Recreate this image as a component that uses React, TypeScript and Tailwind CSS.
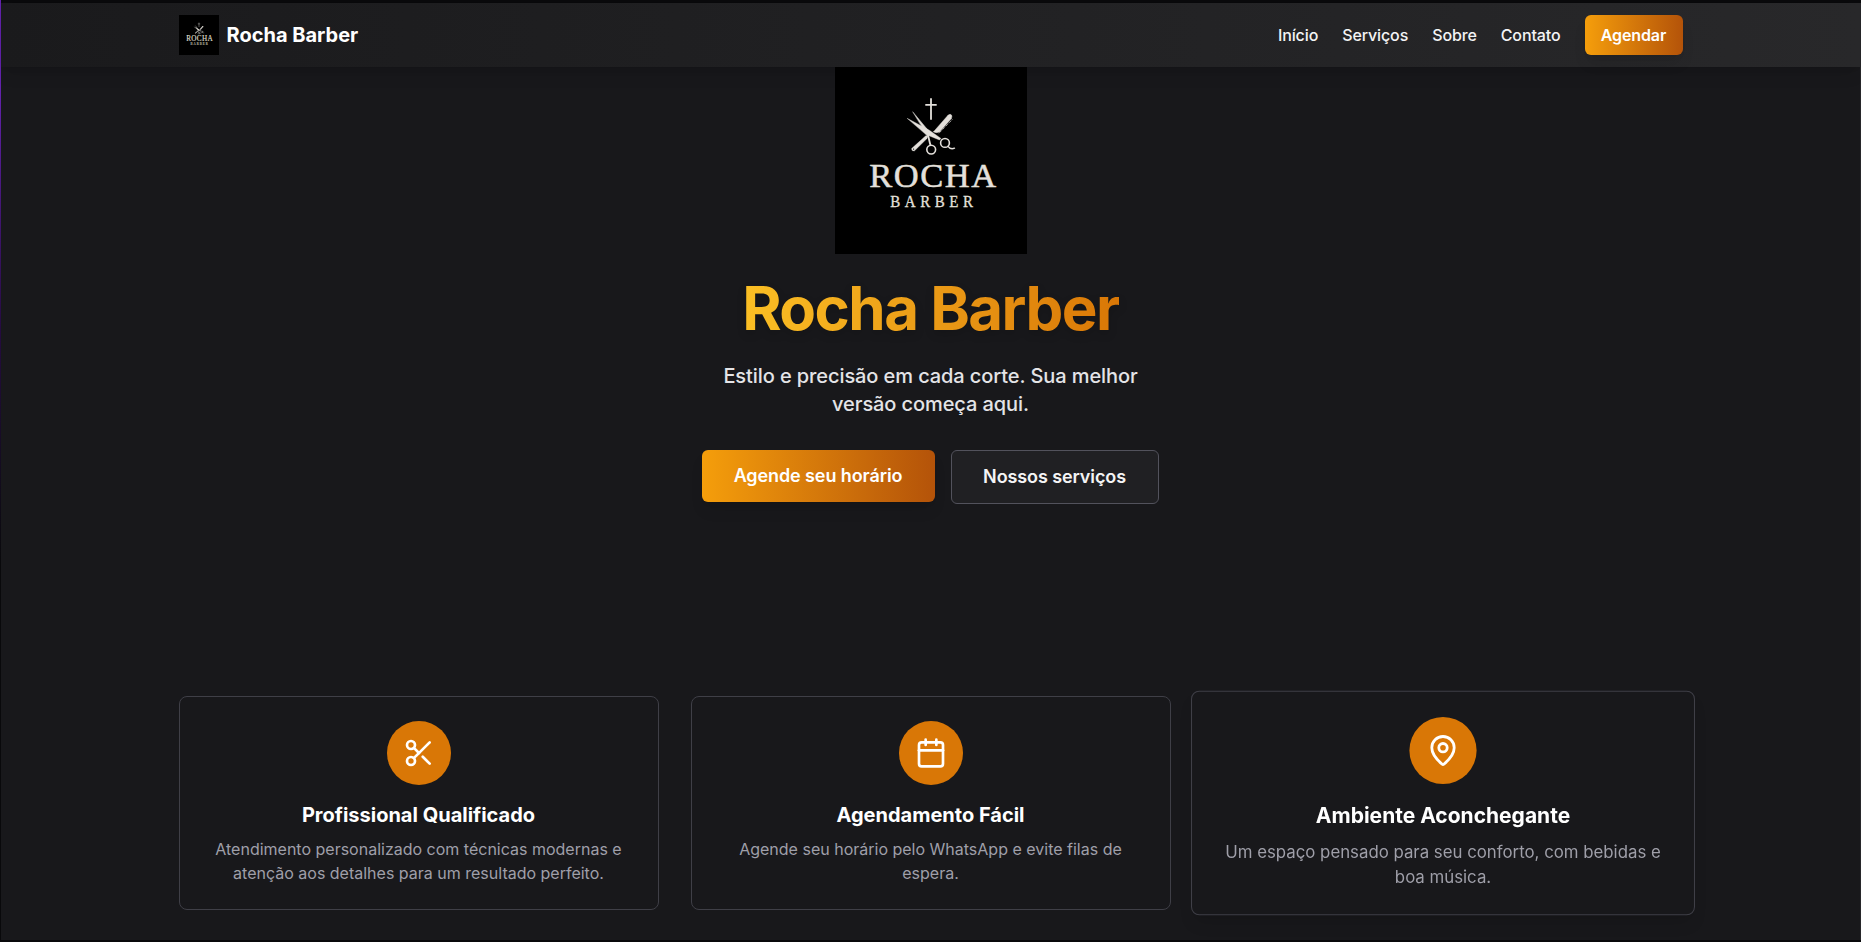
import type { ReactNode } from "react";
import { Calendar, MapPin, Scissors } from "lucide-react";

function Logo({ className }: { className: string }) {
  return (
    <svg viewBox="0 0 192 192" className={className} role="img">
      <rect width="192" height="192" fill="#000" />
      <g stroke="#e4e0db" fill="none" strokeLinecap="round">
        <path d="M96 36.3V57.7M90.3 42.8H101.7" strokeWidth="1.8" strokeLinecap="butt" />
        <path d="M77.9 50L95 70.5L92 73Z" fill="#e4e0db" strokeWidth="0.4" />
        <path d="M72.5 56.5L94 68L106 76.5L104.5 78L91 72.5Z" fill="#e4e0db" strokeWidth="0.4" />
        <path d="M92.5 71L95.3 82.8" strokeWidth="1.8" />
        <circle cx="96.2" cy="87.6" r="4.4" strokeWidth="1.6" />
        <circle cx="110" cy="80.9" r="4.4" strokeWidth="1.6" />
        <path d="M113 84.3Q115.5 87.8 119.5 86.2" strokeWidth="1.4" />
        <path d="M98.5 69.8L113 53.2Q115.5 51.2 117 53.8L116.5 56.5L104.5 70Q101 71.5 98.5 69.8Z" fill="#e4e0db" strokeWidth="0.4" />
        <path d="M104 71.2L117.6 57.2" strokeWidth="1" strokeDasharray="1 1" strokeLinecap="butt" />
        <path d="M93.5 73L92 76.5L79.5 88.8Q76.5 89.5 76.6 86.6L90.5 74Z" fill="#e4e0db" strokeWidth="0.4" />
        <circle cx="78.6" cy="87.1" r="0.6" fill="#000" stroke="none" />
      </g>
      <g fill="#e4e0db" stroke="#e4e0db" fontFamily="Liberation Serif, serif">
        <text x="34.2" y="124.5" fontSize="34.5" strokeWidth="0.5" textLength="127" lengthAdjust="spacing">ROCHA</text>
        <text transform="translate(55.2 145.2) scale(0.88 1)" fontSize="17" strokeWidth="0.3" textLength="94" lengthAdjust="spacing">BARBER</text>
      </g>
    </svg>
  );
}

const links = ["Início", "Serviços", "Sobre", "Contato"];

function Header() {
  return (
    <header className="relative z-10 h-16 bg-linear-to-r from-[#1a1a1c] to-[#28282a] shadow-lg">
      <div className="mx-auto flex h-full max-w-[1536px] items-center justify-between px-4">
        <a href="#" className="flex items-center gap-2">
          <Logo className="size-10" />
          <span className="text-xl font-bold text-white">Rocha Barber</span>
        </a>
        <nav className="flex items-center gap-6 font-medium tracking-[-0.12px] text-zinc-100">
          {links.map((l) => (
            <a key={l} href="#">{l}</a>
          ))}
          <a href="#" className="w-[98px] rounded-md bg-linear-to-r from-[#f59e0b] to-[#b45309] py-2 text-center font-semibold text-white shadow-lg">
            Agendar
          </a>
        </nav>
      </div>
    </header>
  );
}

function Hero() {
  return (
    <section className="-mt-[5px] flex h-[602px] flex-col items-center text-center">
      <Logo className="size-48" />
      <h1 className="mt-6 bg-linear-to-r from-[#fbbf24] to-[#d97706] bg-clip-text text-6xl leading-none font-bold tracking-[-1.53px] text-transparent drop-shadow-lg">
        Rocha Barber
      </h1>
      <p className="mt-6 max-w-md text-xl font-medium tracking-[-0.09px] text-zinc-200">
        Estilo e precisão em cada corte. Sua melhor versão começa aqui.
      </p>
      <div className="mt-8 flex items-start gap-4 pr-px text-lg font-semibold tracking-[-0.1px]">
        <a href="#" className="w-[233px] rounded-md bg-linear-to-r from-[#f59e0b] to-[#b45309] py-3 text-white shadow-lg">
          Agende seu horário
        </a>
        <a href="#" className="w-[208px] rounded-md border border-zinc-600 bg-[#202023] py-3 text-zinc-100">
          Nossos serviços
        </a>
      </div>
    </section>
  );
}

function Card({ icon, title, text, className = "" }: { icon: ReactNode; title: string; text: string; className?: string }) {
  return (
    <div className={`flex flex-col items-center rounded-lg border border-zinc-700 bg-[#18181b] p-6 text-center ${className}`}>
      <div className="mb-4 flex size-16 items-center justify-center rounded-full bg-[#d97706] text-white">{icon}</div>
      <h3 className="mb-2 text-xl font-bold text-white">{title}</h3>
      <p className="text-zinc-400">{text}</p>
    </div>
  );
}

export default function App() {
  return (
    <div className="flex h-[942px] w-[1861px] overflow-hidden bg-[#09090b] font-['Inter',sans-serif]">
      <div className="w-px shrink-0 bg-linear-to-b from-[#6222ab] from-10% via-[#250b40] via-35% to-[#09090b] to-60%" />
      <div className="mt-[3px] mb-[2px] flex-1 bg-[#18181b]">
        <Header />
        <Hero />
        <section className="mx-auto grid max-w-[1536px] grid-cols-3 gap-8 px-4 pt-8">
          <Card
            icon={<Scissors size={32} />}
            title="Profissional Qualificado"
            text="Atendimento personalizado com técnicas modernas e atenção aos detalhes para um resultado perfeito."
          />
          <Card
            icon={<Calendar size={32} />}
            title="Agendamento Fácil"
            text="Agende seu horário pelo WhatsApp e evite filas de espera."
          />
          <Card
            icon={<MapPin size={32} />}
            title="Ambiente Aconchegante"
            text="Um espaço pensado para seu conforto, com bebidas e boa música."
            className="scale-105 shadow-lg"
          />
        </section>
      </div>
      <div className="mt-[3px] mb-[2px] w-px shrink-0 bg-[#27272a]" />
    </div>
  );
}
